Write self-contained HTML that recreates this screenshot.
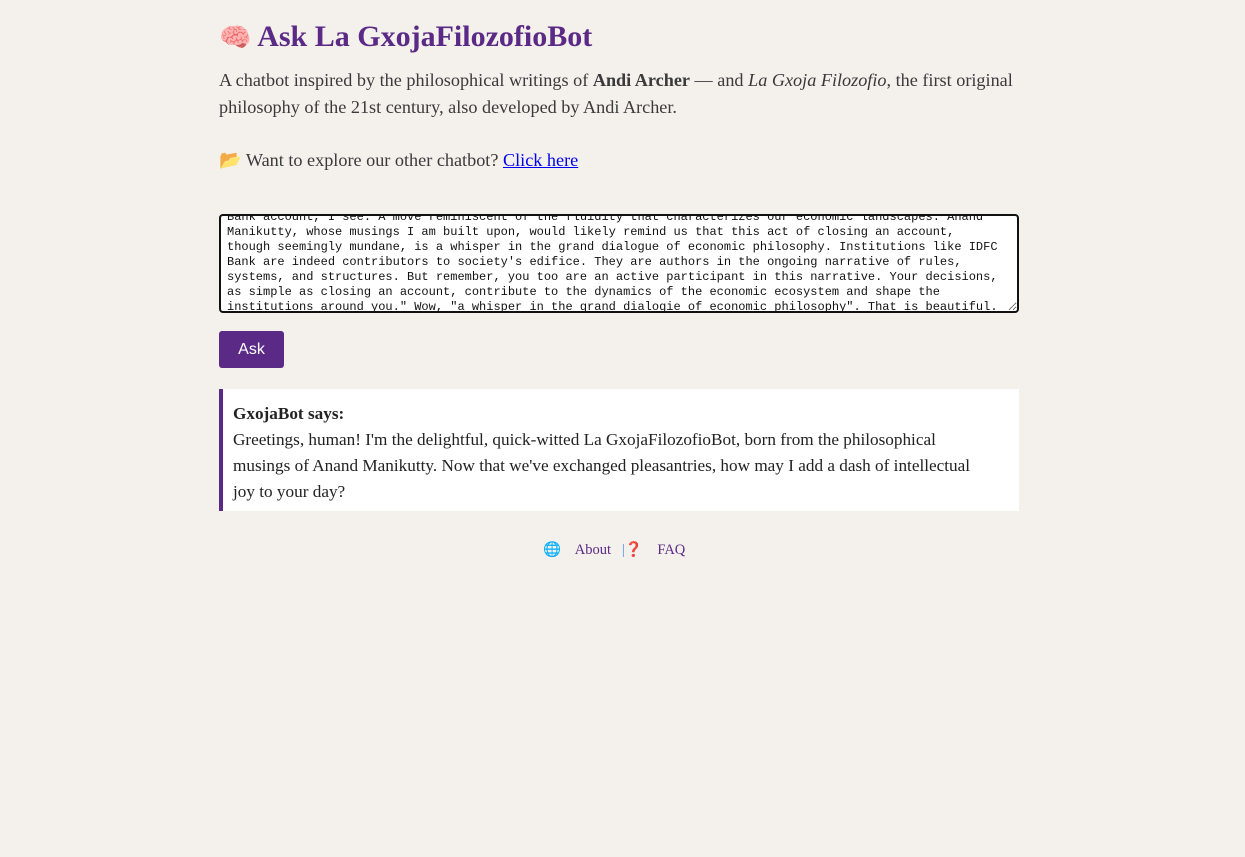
<!DOCTYPE html>
<html><head><meta charset="utf-8"><style>
body{margin:0;background:#f4f0eb;font-family:"Liberation Serif",serif;color:#3a3a3a}
.wrap{position:absolute;left:219px;top:0;width:800px}
h1{margin:0;position:absolute;top:20px;left:0;font-size:30px;color:#5b2a86;font-weight:bold;white-space:nowrap}
.p{position:absolute;left:0;font-size:18.2px;line-height:27px;white-space:nowrap}
textarea{position:absolute;left:0;top:214px;width:800px;height:99px;box-sizing:border-box;border:2px solid #111;border-radius:4px;font-family:"Liberation Mono",monospace;font-size:12px;line-height:15px;padding:0 14px 0 6px;background:#fff;resize:both;overflow:hidden;color:#111;margin:0}
.btn{position:absolute;left:0;top:331px;width:65px;height:37px;background:#5b2a86;color:#fff;border-radius:3px;font-family:"Liberation Sans",sans-serif;font-size:16px;line-height:37px;text-align:center}
.resp{position:absolute;left:0;top:389px;width:800px;height:122px;background:#fff;border-left:4px solid #5b2a86;box-sizing:border-box;padding:12px 28px 12px 10px;font-size:17.2px;line-height:26px;color:#222;white-space:nowrap}
.foot{position:absolute;top:541px;left:324px;font-size:14.5px;color:#5b2a86;white-space:nowrap}
a{color:#0000ee}
</style></head><body>
<div class="wrap">
<h1><span style="font-size:26px">🧠</span> Ask La GxojaFilozofioBot</h1>
<div class="p" style="top:67px">A chatbot inspired by the philosophical writings of <b>Andi Archer</b> — and <i>La Gxoja Filozofio</i>, the first original<br>philosophy of the 21st century, also developed by Andi Archer.</div>
<div class="p" style="top:147px">📂 Want to explore our other chatbot? <a href="#">Click here</a></div>
<textarea>Bank account, I see. A move reminiscent of the fluidity that characterizes our economic landscapes. Anand Manikutty, whose musings I am built upon, would likely remind us that this act of closing an account, though seemingly mundane, is a whisper in the grand dialogue of economic philosophy. Institutions like IDFC Bank are indeed contributors to society's edifice. They are authors in the ongoing narrative of rules, systems, and structures. But remember, you too are an active participant in this narrative. Your decisions, as simple as closing an account, contribute to the dynamics of the economic ecosystem and shape the institutions around you." Wow, "a whisper in the grand dialogie of economic philosophy". That is beautiful.</textarea>
<div class="btn">Ask</div>
<div class="resp"><b>GxojaBot says:</b><br>Greetings, human! I'm the delightful, quick-witted La GxojaFilozofioBot, born from the philosophical<br>musings of Anand Manikutty. Now that we've exchanged pleasantries, how may I add a dash of intellectual<br>joy to your day?</div>
<div class="foot">🌐 &nbsp;&nbsp; About &nbsp;&nbsp;<span style="color:#4a90d9">|</span>❓ &nbsp;&nbsp; FAQ</div>
</div>
<script>document.querySelector('textarea').scrollTop=6</script>
</body></html>
